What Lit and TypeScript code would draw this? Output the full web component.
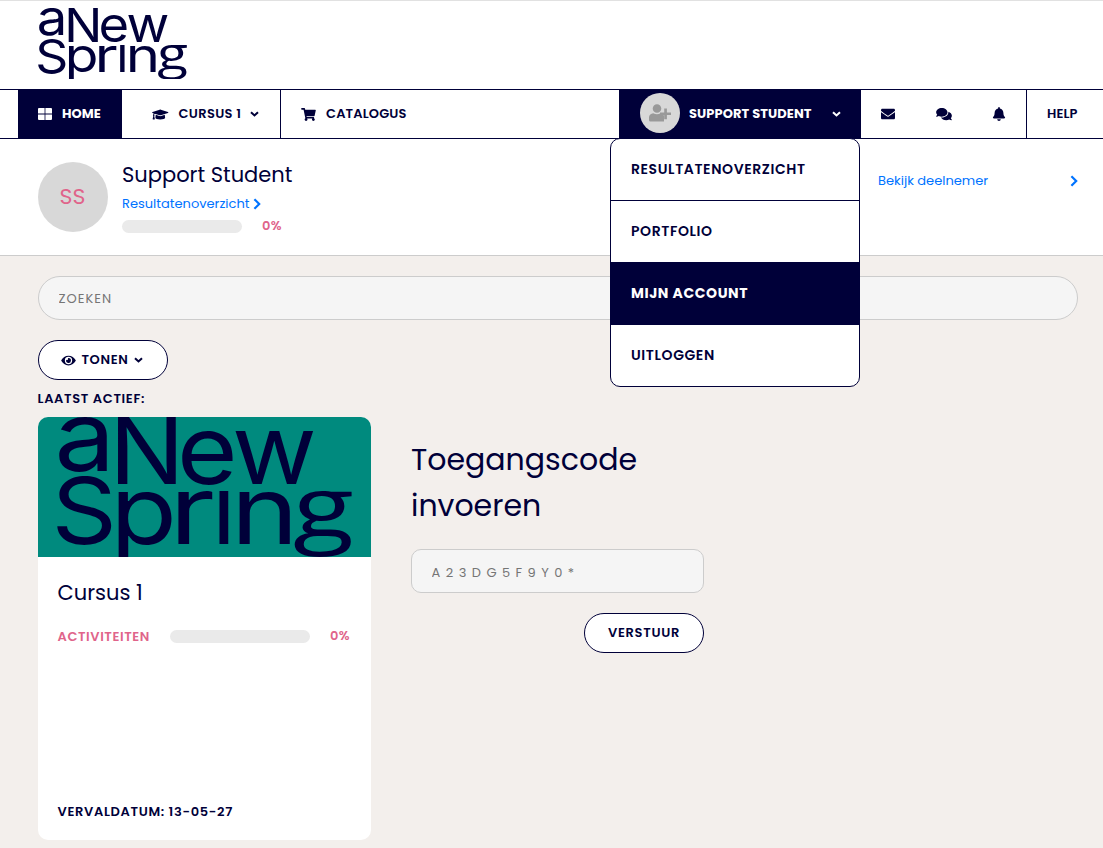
import { LitElement, html, svg, css } from 'lit'
import { customElement, property } from 'lit/decorators.js'
import { classMap } from 'lit/directives/class-map.js'

// [viewBox width, viewBox height, content]
const ICONS: Record<string, [number, number, unknown]> = {
  grid: [14, 12, svg`<path d="M1 0h5.6v5.6H0V1a1 1 0 0 1 1-1zM7.4 0H13a1 1 0 0 1 1 1v4.6H7.4zM0 6.4h6.6V12H1a1 1 0 0 1-1-1zM7.4 6.4H14V11a1 1 0 0 1-1 1H7.4z"/>`],
  cap: [640, 512, svg`<path d="M622.34 153.2L343.4 67.5c-15.2-4.67-31.6-4.67-46.79 0L17.66 153.2c-23.54 7.23-23.54 38.36 0 45.59l48.63 14.94c-10.67 13.19-17.23 29.28-17.88 46.9C38.78 266.15 32 276.11 32 288c0 10.78 5.68 19.85 13.86 25.65L20.33 428.53C18.11 438.52 25.71 448 35.94 448h56.11c10.24 0 17.84-9.48 15.62-19.47L82.14 313.65C90.32 307.85 96 298.78 96 288c0-11.57-6.47-21.25-15.66-26.87.76-15.02 8.44-28.3 20.69-36.72L296.6 284.5c9.06 2.78 26.44 6.25 46.79 0l278.95-85.7c23.55-7.24 23.55-38.36 0-45.6zM352.79 315.09c-28.53 8.76-52.84 3.92-65.59 0l-145.02-44.55L128 384c0 35.35 85.96 64 192 64s192-28.65 192-64l-14.18-113.47-145.03 44.56z"/>`],
  cart: [576, 512, svg`<path d="M528.12 301.319l47.273-208C578.806 78.301 567.391 64 551.99 64H159.208l-9.166-44.81C147.758 8.021 137.93 0 126.529 0H24C10.745 0 0 10.745 0 24v16c0 13.255 10.745 24 24 24h69.883l70.248 343.435C147.325 417.1 136 435.222 136 456c0 30.928 25.072 56 56 56s56-25.072 56-56c0-15.674-6.447-29.835-16.824-40h209.647C430.447 426.165 424 440.326 424 456c0 30.928 25.072 56 56 56s56-25.072 56-56c0-22.172-12.888-41.332-31.579-50.405l5.517-24.276c3.413-15.018-8.002-29.319-23.403-29.319H218.117l-6.545-32h293.145c11.206 0 20.92-7.754 23.403-18.681z"/>`],
  userPlus: [22, 18, svg`<path d="M8 .2a4.3 4.3 0 1 1 0 8.6 4.3 4.3 0 0 1 0-8.6zM4.2 9.2Q8 11.4 11.6 9.2L15 11.5V17.6H1.6Q0 17.6 0 16V13Q.6 9.6 4.2 9.2z"/><path d="M15.2 4.4h2.7v4h4.1v2.7h-4.1v4.1h-2.7v-4.1H11V8.4h4.2z"/>`],
  mail: [512, 512, svg`<path d="M502.3 190.8c3.9-3.1 9.7-.2 9.7 4.7V400c0 26.5-21.5 48-48 48H48c-26.5 0-48-21.5-48-48V195.6c0-5 5.7-7.8 9.7-4.7 22.4 17.4 52.1 39.5 154.1 113.6 21.1 15.4 56.7 47.8 92.2 47.6 35.7.3 72-32.8 92.3-47.6 102-74.1 131.6-96.3 154-113.7zM256 320c23.2.4 56.6-29.2 73.4-41.4 132.7-96.3 142.8-104.7 173.4-128.7 5.8-4.5 9.2-11.5 9.2-18.9v-19c0-26.5-21.5-48-48-48H48c-26.5 0-48 21.5-48 48v19c0 7.4 3.4 14.3 9.2 18.9 30.6 23.9 40.7 32.4 173.4 128.7 16.8 12.2 50.2 41.8 73.4 41.4z"/>`],
  comments: [576, 512, svg`<path d="M416 192c0-88.4-93.1-160-208-160S0 103.6 0 192c0 34.3 14.1 65.9 38 92-13.4 30.2-35.5 54.2-35.8 54.5-2.2 2.3-2.8 5.7-1.5 8.7S4.8 352 8 352c36.6 0 66.9-12.3 88.7-25 32.2 15.7 70.3 25 111.3 25 114.9 0 208-71.6 208-160zm122 220c23.9-26 38-57.7 38-92 0-66.9-53.5-124.2-129.3-148.1.9 6.6 1.3 13.3 1.3 20.1 0 105.9-107.7 192-240 192-10.8 0-21.3-.8-31.7-1.9C207.8 439.6 281.8 480 368 480c41 0 79.1-9.2 111.3-25 21.8 12.7 52.1 25 88.7 25 3.2 0 6.1-1.9 7.3-4.8 1.3-2.9.7-6.3-1.5-8.7-.3-.3-22.4-24.2-35.8-54.5z"/>`],
  bell: [448, 512, svg`<path d="M224 512c35.32 0 63.97-28.65 63.97-64H160.03c0 35.35 28.65 64 63.97 64zm215.39-149.71c-19.32-20.76-55.47-51.99-55.47-154.29 0-77.7-54.48-139.9-127.94-155.16V32c0-17.67-14.32-32-31.98-32s-31.98 14.33-31.98 32v20.84C118.56 68.1 64.08 130.3 64.08 208c0 102.3-36.15 133.53-55.47 154.29-6 6.45-8.66 14.16-8.61 21.71.11 16.4 12.98 32 32.1 32h383.8c19.12 0 32-15.6 32.1-32 .05-7.55-2.61-15.27-8.61-21.71z"/>`],
  eye: [576, 512, svg`<path d="M572.52 241.4C518.29 135.59 410.93 64 288 64S57.68 135.64 3.48 241.41a32.35 32.35 0 0 0 0 29.19C57.71 376.41 165.07 448 288 448s230.32-71.64 284.52-177.41a32.35 32.35 0 0 0 0-29.19zM288 400a144 144 0 1 1 144-144 143.93 143.93 0 0 1-144 144zm0-240a95.31 95.31 0 0 0-25.31 3.79 47.85 47.85 0 0 1-66.9 66.9A95.78 95.78 0 1 0 288 160z"/>`],
  down: [9, 6, svg`<path d="M1 1.2l3.5 3.3L8 1.2" fill="none" stroke="currentColor" stroke-width="2"/>`],
  right: [8, 12, svg`<path d="M1.4 1.2L6.2 6l-4.8 4.8" fill="none" stroke="currentColor" stroke-width="2.2"/>`],
}

// letter, x, baseline, horizontal scale, vertical scale
const LOGO_LETTERS: [string, number, number, number, number][] = [
  ['a', -2.4, 54, 1.08, 0.97],
  ['N', 52.2, 67.3, 1, 0.915],
  ['e', 120, 67, 1.04, 0.96],
  ['w', 175, 67.3, 1.035, 0.965],
  ['S', -5.5, 127.3, 1.02, 0.925],
  ['p', 53.2, 126.7, 1.09, 0.95],
  ['r', 112, 127, 1.22, 0.95],
  ['ı', 154.7, 127, 1, 0.965],
  ['n', 173.8, 127, 1.15, 0.95],
]

@customElement('app-icon')
class AppIcon extends LitElement {
  @property() name = ''

  static styles = css`
    :host {
      display: inline-flex;
      flex: none;
    }

    svg {
      display: block;
      width: 100%;
      height: 100%;
      fill: currentColor;
    }
  `

  render() {
    const [w, h, body] = ICONS[this.name]
    return html`<svg viewBox="0 0 ${w} ${h}" aria-hidden="true">${body}</svg>`
  }
}

@customElement('app-logo')
class AppLogo extends LitElement {
  static styles = css`
    :host {
      display: block;
    }

    svg {
      display: block;
      width: 100%;
      height: 100%;
      overflow: hidden;
      fill: #000039;
    }

    text {
      font: 100px Inter, 'Liberation Sans', sans-serif;
    }

    .loop {
      font-family: 'Open Sans', sans-serif;
    }
  `

  render() {
    return html`
      <svg viewBox="0 0 296 140" preserveAspectRatio="none" role="img" aria-label="aNewSpring">
        ${LOGO_LETTERS.map(
          ([char, x, y, sx, sy]) => svg`<text transform="translate(${x} ${y}) scale(${sx} ${sy})">${char}</text>`
        )}
        <text class="loop" transform="translate(236 119.5) scale(1.12 .85)">g</text>
      </svg>
    `
  }
}

@customElement('app-progress')
class AppProgress extends LitElement {
  @property({ type: Number }) value = 0

  static styles = css`
    :host {
      display: flex;
      align-items: center;
      gap: 20px;
      font-weight: 600;
      font-size: 13px;
      letter-spacing: 0.3px;
      color: #e0648a;
    }

    .track {
      width: var(--track-width, 120px);
      height: 13px;
      border-radius: 7px;
      background: #eaeaea;
      overflow: hidden;
    }

    .fill {
      height: 100%;
      background: #e0648a;
    }
  `

  render() {
    return html`
      <div class="track"><div class="fill" style="width: ${this.value}%"></div></div>
      <span>${this.value}%</span>
    `
  }
}

@customElement('app-root')
class AppRoot extends LitElement {
  static styles = css`
    :host {
      display: block;
      box-sizing: border-box;
      height: 848px;
      overflow: hidden;
      background: #f3efec;
      color: #000039;
      font-family: Poppins, Inter, sans-serif;
      font-size: 13px;
    }

    * {
      box-sizing: border-box;
    }

    header {
      height: 89px;
      padding: 7px 38px 0;
      border-top: 1px solid #e1e1e1;
      background: #fff;
    }

    header app-logo {
      width: 149.5px;
      height: 71px;
    }

    nav {
      display: flex;
      height: 50px;
      padding-left: 18px;
      border: solid #000039;
      border-width: 1px 0;
      background: #fff;
      font-weight: 600;
    }

    .item {
      display: flex;
      align-items: center;
      white-space: nowrap;
    }

    .dark {
      background: #000039;
      color: #fff;
      font-weight: 700;
    }

    .home {
      width: 104px;
      padding-left: 20px;
      gap: 10px;
    }

    .home app-icon {
      width: 14px;
      height: 12px;
    }

    .course {
      width: 159px;
      padding-left: 30px;
      gap: 10px;
      border-right: 1px solid #000039;
      letter-spacing: 0.35px;
    }

    .course app-icon {
      width: 16.5px;
      height: 13px;
    }

    .course .down {
      margin-left: -1px;
    }

    .catalog {
      flex: 1;
      padding-left: 20px;
      gap: 10px;
      letter-spacing: 0.15px;
    }

    .catalog app-icon {
      width: 15px;
      height: 13px;
    }

    .account {
      position: relative;
      width: 242px;
      padding-left: 21px;
      gap: 9px;
      letter-spacing: 0.08px;
    }

    .account .toggle {
      margin-left: 11px;
    }

    .portrait {
      display: flex;
      align-items: center;
      justify-content: center;
      width: 40px;
      height: 40px;
      margin-top: -2px;
      border-radius: 50%;
      background: #d8d8d8;
      color: #999;
    }

    .portrait app-icon {
      width: 22px;
      height: 18px;
    }

    app-icon.down.down {
      width: 9px;
      height: 6px;
    }

    .tools {
      width: 166px;
      padding-left: 19px;
      gap: 39.5px;
      border-right: 1px solid #000039;
    }

    .tools app-icon {
      width: 16px;
      height: 14px;
    }

    .help {
      width: 76px;
      padding-left: 20px;
      letter-spacing: 0.1px;
    }

    .menu {
      position: absolute;
      z-index: 2;
      top: 48px;
      left: -9px;
      width: 250px;
      margin: 0;
      padding: 0;
      overflow: hidden;
      list-style: none;
      border: 1px solid #000039;
      border-radius: 10px;
      background: #fff;
      color: #000039;
      font-size: 14px;
      font-weight: 600;
      letter-spacing: 0.6px;
    }

    .menu li {
      display: flex;
      align-items: center;
      height: 62px;
      padding-left: 20px;
      border-bottom: 1px solid #000039;
    }

    .menu li:last-child {
      height: 61px;
      border-bottom: 0;
    }

    .menu .active {
      background: #000039;
      color: #fff;
      font-weight: 700;
    }

    .profile {
      display: flex;
      height: 117px;
      padding: 23px 25px 0 38px;
      border-bottom: 1px solid #ccc;
      background: #fff;
    }

    .avatar {
      display: flex;
      align-items: center;
      justify-content: center;
      width: 70px;
      height: 70px;
      padding: 0 1px 1px 0;
      border-radius: 50%;
      background: #d8d8d8;
      color: #e0648a;
      font-size: 22px;
    }

    .who {
      margin-left: 14px;
    }

    .name {
      height: 31px;
      line-height: 26px;
      font-size: 21px;
    }

    a {
      display: flex;
      align-items: center;
      color: #0073ff;
      text-decoration: none;
    }

    .who a {
      height: 21px;
      gap: 4px;
    }

    a app-icon {
      width: 8px;
      height: 12px;
    }

    .who app-progress {
      height: 24px;
    }

    .view {
      width: 200px;
      height: 20px;
      margin: 9px 0 0 auto;
      justify-content: space-between;
    }

    main {
      padding: 20px 25px 0 38px;
    }

    input {
      display: block;
      width: 100%;
      height: 44px;
      margin: 0;
      padding: 2px 19.5px 0;
      border: 1px solid #ccc;
      border-radius: 10px;
      outline: 0;
      background: #f5f5f5;
      font: inherit;
      font-size: 13px;
    }

    input::placeholder {
      color: #757575;
      opacity: 1;
    }

    .search {
      border-radius: 22px;
      letter-spacing: 1px;
    }

    button {
      display: flex;
      align-items: center;
      justify-content: center;
      height: 40px;
      padding: 0;
      border: 1px solid #000039;
      border-radius: 20px;
      background: #fff;
      color: #000039;
      font: inherit;
      font-weight: 600;
      letter-spacing: 0.7px;
    }

    .show {
      width: 130px;
      margin: 20px 0 9px;
      padding-right: 2px;
      gap: 5px;
    }

    .show .eye {
      width: 15px;
      height: 13px;
    }

    .label {
      height: 28px;
      margin-left: -0.5px;
      line-height: 20px;
      font-weight: 600;
      letter-spacing: 0.67px;
    }

    .columns {
      display: flex;
      gap: 40px;
    }

    .card {
      display: flex;
      flex-direction: column;
      width: 333px;
      height: 423px;
      border-radius: 10px;
      overflow: hidden;
      background: #fff;
    }

    .cover {
      height: 140px;
      padding-left: 18.5px;
      background: #008a7e;
    }

    .cover app-logo {
      width: 296px;
      height: 140px;
    }

    .body {
      flex: 1;
      display: flex;
      flex-direction: column;
      padding: 21px 19.5px 18px;
    }

    .title {
      line-height: 30px;
      font-size: 21px;
    }

    .activity {
      display: flex;
      align-items: center;
      height: 20px;
      margin-top: 18px;
      font-weight: 600;
      letter-spacing: 0.6px;
      color: #e0648a;
    }

    .activity span {
      width: 112.5px;
      padding-top: 1px;
    }

    .activity app-progress {
      --track-width: 140px;
    }

    .expires {
      margin-top: auto;
      line-height: 20px;
      font-weight: 600;
      letter-spacing: 0.67px;
    }

    form {
      display: flex;
      flex-direction: column;
      width: 293px;
      padding-top: 20px;
    }

    h2 {
      margin: 0 0 20px;
      font-size: 30px;
      font-weight: 400;
      line-height: 46px;
    }

    .code {
      padding-top: 4px;
      letter-spacing: 5.45px;
    }

    .send {
      width: 120px;
      margin: 20px 0 0 auto;
    }
  `

  menu = ['Resultatenoverzicht', 'Portfolio', 'Mijn account', 'Uitloggen']

  render() {
    return html`
      <header><app-logo></app-logo></header>
      <nav>
        <div class="item dark home"><app-icon name="grid"></app-icon><span>HOME</span></div>
        <div class="item course">
          <app-icon name="cap"></app-icon><span>CURSUS 1</span><app-icon class="down" name="down"></app-icon>
        </div>
        <div class="item catalog"><app-icon name="cart"></app-icon><span>CATALOGUS</span></div>
        <div class="item dark account">
          <div class="portrait"><app-icon name="userPlus"></app-icon></div>
          <span>SUPPORT STUDENT</span>
          <app-icon class="down toggle" name="down"></app-icon>
          <ul class="menu">
            ${this.menu.map(
              (label) => html`
                <li class=${classMap({ active: label === 'Mijn account' })}><span>${label.toUpperCase()}</span></li>
              `
            )}
          </ul>
        </div>
        <div class="item tools">
          <app-icon name="mail"></app-icon>
          <app-icon name="comments"></app-icon>
          <app-icon name="bell"></app-icon>
        </div>
        <div class="item help"><span>HELP</span></div>
      </nav>
      <section class="profile">
        <div class="avatar"><span>SS</span></div>
        <div class="who">
          <div class="name"><span>Support Student</span></div>
          <a href="#"><span>Resultatenoverzicht</span><app-icon name="right"></app-icon></a>
          <app-progress value="0"></app-progress>
        </div>
        <a class="view" href="#"><span>Bekijk deelnemer</span><app-icon name="right"></app-icon></a>
      </section>
      <main>
        <input class="search" placeholder="ZOEKEN" />
        <button class="show">
          <app-icon class="eye" name="eye"></app-icon><span>TONEN</span><app-icon class="down" name="down"></app-icon>
        </button>
        <div class="label"><span>LAATST ACTIEF:</span></div>
        <div class="columns">
          <article class="card">
            <div class="cover"><app-logo></app-logo></div>
            <div class="body">
              <div class="title"><span>Cursus 1</span></div>
              <div class="activity"><span>ACTIVITEITEN</span><app-progress value="0"></app-progress></div>
              <div class="expires"><span>VERVALDATUM: 13-05-27</span></div>
            </div>
          </article>
          <form>
            <h2>Toegangscode invoeren</h2>
            <input class="code" placeholder="A23DG5F9Y0*" />
            <button class="send" type="button">VERSTUUR</button>
          </form>
        </div>
      </main>
    `
  }
}
